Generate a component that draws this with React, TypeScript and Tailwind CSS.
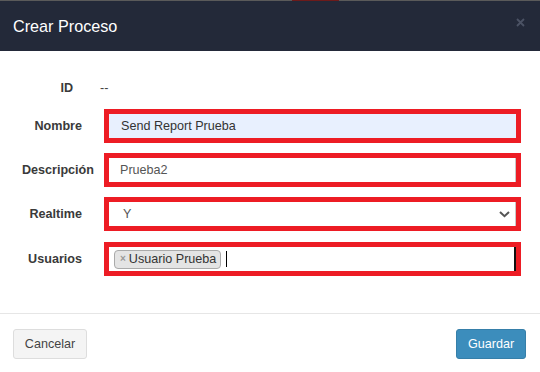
import React from "react";

export default function App() {
  return (
    <div className="w-[540px] h-[372px] bg-white overflow-hidden font-['Liberation_Sans',Arial,sans-serif] text-[#333]">
      {/* top strip */}
      <div className="flex h-px">
        <div className="w-[292px] bg-[#5a5a5a]" />
        <div className="w-[47px] bg-[#6d1b1b]" />
        <div className="flex-1 bg-[#5a5a5a]" />
      </div>
      {/* header */}
      <div className="h-[50px] bg-[#232939] flex items-center justify-between pl-[13px] pr-[15px]">
        <div className="text-[16.2px] text-white leading-none pt-[1px]">Crear Proceso</div>
        <svg width="9" height="9" viewBox="0 0 9 9" className="self-start mt-[17px]">
          <path d="M1 1L8 8M8 1L1 8" stroke="#4b5264" strokeWidth="1.8" />
        </svg>
      </div>
      {/* body */}
      <div className="h-[262px] flex flex-col pt-[27px] text-[12.6px]">
        <div className="h-[20px] flex items-center">
          <div className="w-[104px] text-right pr-[31px] font-bold text-[#3a3a3a]">ID</div>
          <div className="pl-[-4px] -ml-[4px] text-[#444]">--</div>
        </div>
        {/* Nombre */}
        <div className="mt-[11px] flex items-center">
          <div className="w-[104px] text-right pr-[22px] font-bold text-[#3a3a3a]">Nombre</div>
          <div className="w-[417px] h-[34px] border-[5px] border-[#ed1c24]">
            <div className="h-full bg-[#e8f0fe] flex items-center pl-[12px] text-[#333]">Send Report Prueba</div>
          </div>
        </div>
        {/* Descripcion */}
        <div className="mt-[10px] flex items-center">
          <div className="w-[104px] text-right pr-[10px] font-bold text-[#3a3a3a]">Descripción</div>
          <div className="w-[417px] h-[34px] border-[5px] border-[#ed1c24]">
            <div className="h-full bg-white border-r border-[#c8c8c8] flex items-center pl-[11px] text-[#555]">Prueba2</div>
          </div>
        </div>
        {/* Realtime */}
        <div className="mt-[10px] flex items-center">
          <div className="w-[104px] text-right pr-[22px] font-bold text-[#3a3a3a]">Realtime</div>
          <div className="w-[417px] h-[34px] border-[5px] border-[#ed1c24]">
            <div className="h-full bg-white border-r border-[#c8c8c8] flex items-center justify-between pl-[14px] pr-[5px] text-[#555]">
              <span>Y</span>
              <svg width="11" height="7" viewBox="0 0 11 7">
                <path d="M1 1L5.5 5.2L10 1" stroke="#555" strokeWidth="2" fill="none" />
              </svg>
            </div>
          </div>
        </div>
        {/* Usuarios */}
        <div className="mt-[11px] flex items-center">
          <div className="w-[104px] text-right pr-[22px] font-bold text-[#3a3a3a]">Usuarios</div>
          <div className="w-[417px] h-[34px] border-[5px] border-[#ed1c24]">
            <div className="h-full bg-white border-r-2 border-[#111] flex items-center pl-[5px]">
              <div className="h-[19px] flex items-center border border-[#aaa] bg-[#e4e4e4] rounded-[4px] pl-[5px] pr-[4px]">
                <span className="text-[10px] font-bold text-[#999] mr-[3px] leading-none">×</span>
                <span className="text-[#333] leading-none">Usuario Prueba</span>
              </div>
              <div className="ml-[5px] w-px h-[16px] bg-black" />
            </div>
          </div>
        </div>
      </div>
      {/* footer */}
      <div className="border-t border-[#e6e6e6] flex justify-between pt-[15px] pl-[13px] pr-[14px] text-[12.6px]">
        <div className="w-[74px] h-[30px] flex items-center justify-center bg-[#f4f4f4] border border-[#ddd] rounded-[3px] text-[#444]">Cancelar</div>
        <div className="w-[70px] h-[30px] flex items-center justify-center bg-[#3c8dbc] border border-[#367fa9] rounded-[3px] text-white">Guardar</div>
      </div>
    </div>
  );
}
